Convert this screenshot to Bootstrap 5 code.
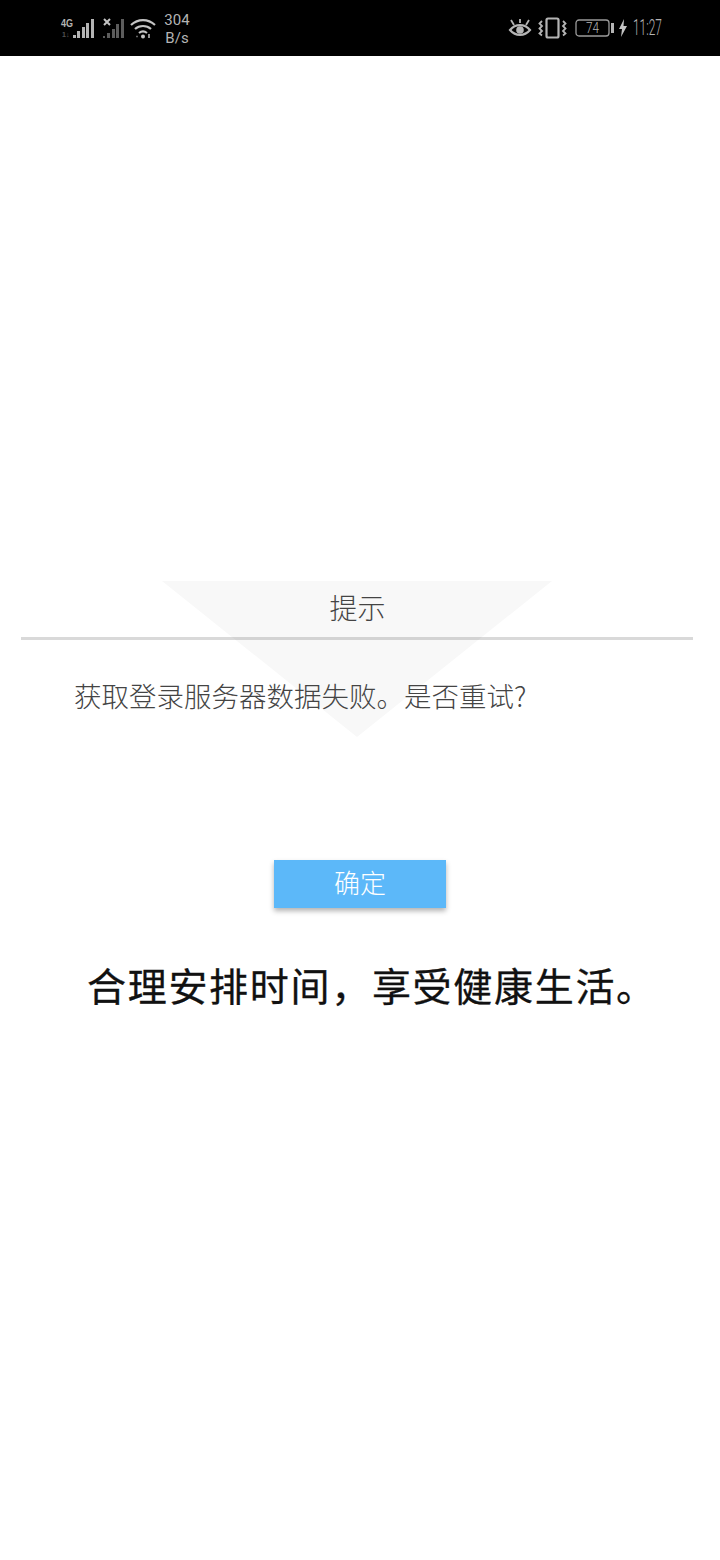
<!DOCTYPE html>
<html lang="zh-CN">
<head>
    <meta charset="UTF-8">
    <meta name="viewport" content="width=device-width, initial-scale=1.0">
    <title>提示</title>
    <link href="https://cdn.jsdelivr.net/npm/bootstrap@5.3.0/dist/css/bootstrap.min.css" rel="stylesheet">
    <style>
        body { font-family: "Noto Sans CJK SC", "Noto Sans", sans-serif; background: #fff; width: 720px; height: 1560px; overflow: hidden; }
        .status-bar { height: 56px; background: #000; color: #b4b4b4; padding: 0 58px 0 60px; }
        .status-left { gap: 6px; }
        .wifi-icon { margin-left: -3px; }
        .net-speed { font-family: Roboto, sans-serif; font-size: 15px; line-height: 18px; width: 34px; margin: 2px 0 0 -3px; text-align: center; }
        .status-right { gap: 6px; }
        .batt-icon { margin-left: 2px; }
        .bolt-icon { margin-left: -1px; }
        .clock { display: inline-block; width: 29px; font-family: Roboto, sans-serif; font-weight: 300; font-size: 22px; line-height: 26px; white-space: nowrap; transform: scaleX(.54); transform-origin: left center; }
        .dialog-box { position: relative; margin-top: 525px; }
        .dialog-mark { position: absolute; left: 162px; top: 0; width: 390px; height: 156px; background: #f8f8f8; clip-path: polygon(0 0, 100% 0, 50% 100%); }
        .dialog-title { position: relative; height: 56px; margin-right: 5px; color: #444; font-size: 28px; font-weight: 300; line-height: 52px; text-align: center; }
        .dialog-rule { position: relative; height: 3px; margin: 0 27px 0 21px; background: #000; opacity: .15; }
        .dialog-text { position: relative; margin: 35px 0 0 74px; color: #444; font-size: 27.5px; font-weight: 300; line-height: 40px; white-space: nowrap; }
        .ok-btn { display: block; width: 172px; height: 48px; margin: 145px auto 0; padding: 0 0 4px; border: 0; border-radius: 0; background: #5cb8f9; color: #fff; font-size: 26px; font-weight: 300; line-height: 44px; box-shadow: 0 3px 5px rgba(0, 0, 0, .3); }
        .slogan { margin: 53px 0 0 87px; color: #111; font-size: 39px; font-weight: 400; -webkit-text-stroke: .3px #111; letter-spacing: 1.7px; line-height: 46px; white-space: nowrap; }
    </style>
</head>
<body>
    <!-- status bar -->
    <div class="status-bar d-flex align-items-center justify-content-between">
        <div class="status-left d-flex align-items-center">
            <svg width="36" height="24" viewBox="0 0 36 24" fill="#b4b4b4">
                <rect x="13" y="19" width="3" height="3"/><rect x="17" y="15" width="3" height="7"/><rect x="22" y="11" width="3" height="11"/><rect x="26" y="7" width="3" height="15"/><rect x="31" y="3" width="3" height="19"/>
                <text x="1" y="11" font-family="Liberation Sans" font-size="10" font-weight="700" textLength="12" lengthAdjust="spacingAndGlyphs">4G</text>
                <text x="2" y="21" font-family="Liberation Sans" font-size="7" font-weight="700" opacity=".45">1↓</text>
            </svg>
            <svg width="24" height="24" viewBox="0 0 24 24" fill="#5c5c5c">
                <rect x="1" y="20" width="2" height="2"/><rect x="5" y="17" width="3" height="5"/><rect x="10" y="13" width="3" height="9"/><rect x="14" y="8" width="3" height="14"/><rect x="19" y="3" width="3" height="19"/>
                <path d="M2 3l6 6M8 3l-6 6" stroke="#c4c4c4" stroke-width="2" fill="none"/>
            </svg>
            <svg class="wifi-icon" width="28" height="24" viewBox="0 0 28 24" fill="none" stroke="#c4c4c4" stroke-width="2.200">
                <path d="M2 9c7-6.500 17-6.500 24 0M6 13c4.500-4 11.500-4 16 0M10 17c2.500-2 5.500-2 8 0"/>
                <circle cx="14" cy="20.500" r="2" fill="#c4c4c4" stroke="none"/>
                <path d="M20 18v4" stroke-width="1.500"/><path d="M7 20.500h2" stroke-width="1.500" opacity=".5"/>
            </svg>
            <div class="net-speed">304<br>B/s</div>
        </div>
        <div class="status-right d-flex align-items-center">
            <svg width="24" height="20" viewBox="0 0 24 20" fill="none" stroke="#b4b4b4" stroke-width="2.200">
                <path d="M2 12c5.500-6.500 14.500-6.500 20 0-5.500 6.500-14.500 6.500-20 0z"/>
                <circle cx="12" cy="12" r="3.800" fill="#b4b4b4" stroke="none"/>
                <path d="M3 2l3 5M21 2l-3 5M12 1v4" stroke-width="1.800"/>
            </svg>
            <svg width="29" height="22" viewBox="0 0 29 22" fill="none" stroke="#b4b4b4" stroke-width="1.800">
                <rect x="8.500" y="1.500" width="12" height="19" rx="1.500" stroke-width="2.200"/>
                <path d="M4 4l-2.500 2.500 2.500 2.500-2.500 2.500 2.500 2.500-2.500 2.500 2.500 2M25 4l2.500 2.500-2.500 2.500 2.500 2.500-2.500 2.500 2.500 2.500-2.500 2"/>
            </svg>
            <svg class="batt-icon" width="39" height="18" viewBox="0 0 39 18" fill="none">
                <rect x="1" y="1" width="33" height="16" rx="3" stroke="#9a9a9a" stroke-width="1.300"/>
                <text x="11" y="14" font-family="Roboto" font-weight="300" font-size="14" fill="#b4b4b4" textLength="13" lengthAdjust="spacingAndGlyphs">74</text>
                <rect x="36" y="4" width="3" height="10" fill="#b4b4b4"/>
            </svg>
            <svg class="bolt-icon" width="8" height="18" viewBox="0 0 8 18" fill="#c4c4c4"><path d="M5 0L0 10h3l-1 8 6-11H4.500z"/></svg>
            <span class="clock">11:27</span>
        </div>
    </div>

    <!-- dialog -->
    <div class="dialog-box">
        <div class="dialog-mark"></div>
        <div class="dialog-title">提示</div>
        <div class="dialog-rule"></div>
        <div class="dialog-text">获取登录服务器数据失败。是否重试?</div>
        <button type="button" class="btn ok-btn">确定</button>
    </div>

    <div class="slogan">合理安排时间，享受健康生活。</div>

    <script src="https://cdn.jsdelivr.net/npm/bootstrap@5.3.0/dist/js/bootstrap.bundle.min.js"></script>
</body>
</html>
